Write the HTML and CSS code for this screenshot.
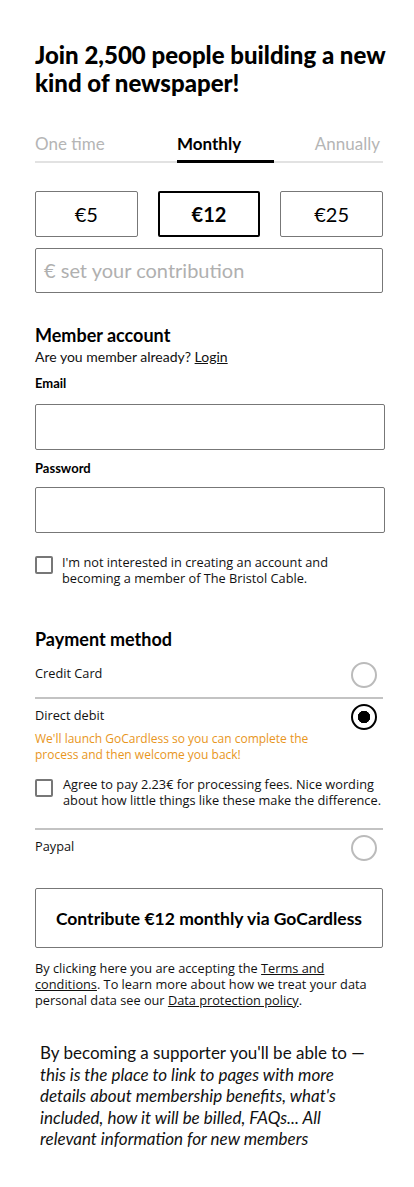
FILE: index.html
```html
<!DOCTYPE html>
<html lang="en">
<head>
<meta charset="utf-8">
<title>Join</title>
<link rel="stylesheet" href="styles.css">
</head>
<body>
<main class="page">
  <h1 class="title">Join 2,500 people building a new kind of newspaper!</h1>

  <nav class="tabs">
    <span class="tab">One time</span>
    <span class="tab tab-active">Monthly</span>
    <span class="tab tab-right">Annually</span>
  </nav>

  <div class="amounts">
    <button class="amount">€5</button>
    <button class="amount amount-active">€12</button>
    <button class="amount">€25</button>
  </div>
  <div class="custom">€ set your contribution</div>

  <section class="account">
    <h2 class="section-title">Member account</h2>
    <p class="login">Are you member already? <a class="link" href="#">Login</a></p>
    <label class="label">Email</label>
    <div class="input"></div>
    <label class="label label-pw">Password</label>
    <div class="input input-pw"></div>
    <div class="check check-account">
      <span class="box"></span>
      <span class="check-text">I'm not interested in creating an account and becoming a member of The Bristol Cable.</span>
    </div>
  </section>

  <section class="payment">
    <h2 class="section-title pay-title">Payment method</h2>
    <div class="method">
      <div class="method-row"><span class="method-name">Credit Card</span><span class="radio"></span></div>
    </div>
    <div class="method">
      <div class="method-row"><span class="method-name">Direct debit</span><span class="radio radio-on"></span></div>
      <p class="notice">We'll launch GoCardless so you can complete the process and then welcome you back!</p>
      <div class="check check-fee">
        <span class="box"></span>
        <span class="check-text">Agree to pay 2.23€ for processing fees. Nice wording about how little things like these make the difference.</span>
      </div>
    </div>
    <div class="method method-last">
      <div class="method-row"><span class="method-name">Paypal</span><span class="radio"></span></div>
    </div>
  </section>

  <button class="submit">Contribute €12 monthly via GoCardless</button>

  <p class="terms">By clicking here you are accepting the <a class="link" href="#">Terms and </a><a class="link" href="#">conditions</a>. To learn more about how we treat your data personal data see our <a class="link" href="#">Data protection policy</a>.</p>

  <p class="benefits">By becoming a supporter you'll be able to — <em>this is the place to link to pages with more details about membership benefits, what's included, how it will be billed, FAQs... All relevant information for new members</em></p>
</main>
</body>
</html>
```

FILE: styles.css
```css
html, body {
  margin: 0;
  padding: 0;
  background: #fff;
}
body {
  font-family: "Open Sans", "Liberation Sans", sans-serif;
  color: #111;
}
.page {
  width: 348px;
  padding: 41px 0 40px 35px;
}
.title {
  margin: 0 -12px 0 0;
  font-family: Lato, "Liberation Sans", sans-serif;
  font-weight: 900;
  font-size: 24px;
  line-height: 28px;
  color: #000;
}
.tabs {
  display: grid;
  grid-template-columns: 142px 97px 1fr;
  margin-top: 32px;
  border-bottom: 2px solid #e2e2e2;
  font-family: Lato, "Liberation Sans", sans-serif;
  font-size: 17px;
}
.tab {
  color: #b5b5b5;
  line-height: 30px;
  padding-bottom: 1px;
}
.tab-active {
  color: #000;
  font-weight: 700;
  border-bottom: 3px solid #000;
  margin-bottom: -2px;
}
.tab-right {
  text-align: right;
  padding-right: 3px;
}
.amounts {
  display: grid;
  grid-template-columns: 1fr 1fr 1fr;
  gap: 20px;
  margin-top: 28px;
}
.amount {
  height: 46px;
  background: #fff;
  border: 1px solid #777;
  border-radius: 2px;
  font-family: Lato, "Liberation Sans", sans-serif;
  font-size: 20px;
  color: #000;
  padding: 0;
}
.amount-active {
  border: 2px solid #000;
  font-weight: 700;
}
.custom {
  margin-top: 11px;
  height: 43px;
  border: 1px solid #777;
  border-radius: 2px;
  padding-left: 8px;
  font-family: Lato, "Liberation Sans", sans-serif;
  font-size: 20px;
  line-height: 43px;
  color: #b0b0b0;
}
.account {
  margin-top: 31px;
}
.section-title {
  margin: 0;
  font-family: Lato, "Liberation Sans", sans-serif;
  font-weight: 700;
  font-size: 18px;
  line-height: 22px;
  color: #000;
}
.login {
  margin: 2px 0 0;
  font-family: Lato, "Liberation Sans", sans-serif;
  font-size: 14px;
  line-height: 18px;
}
.link {
  color: inherit;
  text-decoration: underline;
}
.label {
  display: block;
  margin-top: 9px;
  font-family: Lato, "Liberation Sans", sans-serif;
  font-weight: 700;
  font-size: 13px;
  line-height: 17px;
  color: #000;
}
.label-pw {
  margin-top: 10px;
}
.input {
  margin-top: 12px;
  height: 44px;
  border: 1px solid #777;
  border-radius: 2px;
  width: 348px;
}
.input-pw {
  margin-top: 10px;
}
.check {
  display: flex;
  align-items: flex-start;
  gap: 9px;
  font-size: 12.75px;
  line-height: 16px;
}
.box {
  flex: none;
  width: 14px;
  height: 14px;
  border: 2px solid #777;
  border-radius: 2px;
  margin-top: 2px;
}
.check-account {
  margin-top: 21px;
}
.payment {
  margin-top: 42px;
}
.pay-title {
  margin-bottom: 7px;
}
.method {
  border-bottom: 2px solid #c3c3c3;
  padding-bottom: 8px;
}
.method-last {
  border-bottom: none;
  padding-bottom: 0;
}
.method-row {
  display: flex;
  justify-content: space-between;
  align-items: center;
  height: 32px;
  font-size: 12.75px;
}
.radio {
  width: 22px;
  height: 22px;
  border: 2px solid #bbb;
  border-radius: 50%;
  margin-right: 6px;
  margin-top: 3px;
}
.radio-on {
  border-color: #000;
  background: radial-gradient(circle, #000 0 6px, #fff 6.5px);
}
.notice {
  margin: 0;
  max-width: 300px;
  color: #e8961c;
  font-size: 12px;
  line-height: 16px;
}
.check-fee {
  margin-top: 13px;
  padding-bottom: 12px;
  gap: 10px;
}
.check-fee .box {
  margin-top: 3px;
}
.submit {
  display: block;
  margin-top: 26px;
  width: 348px;
  height: 60px;
  background: #fff;
  border: 1px solid #777;
  border-radius: 2px;
  font-family: Lato, "Liberation Sans", sans-serif;
  font-weight: 700;
  font-size: 17.5px;
  color: #000;
}
.terms {
  margin: 12px 0 0;
  font-size: 12.75px;
  line-height: 16px;
}
.benefits {
  margin: 34px 0 0 5px;
  max-width: 335px;
  font-family: Lato, "Liberation Sans", sans-serif;
  font-size: 17px;
  line-height: 21.5px;
  color: #111;
}
.benefits em {
  font-style: italic;
}
```
